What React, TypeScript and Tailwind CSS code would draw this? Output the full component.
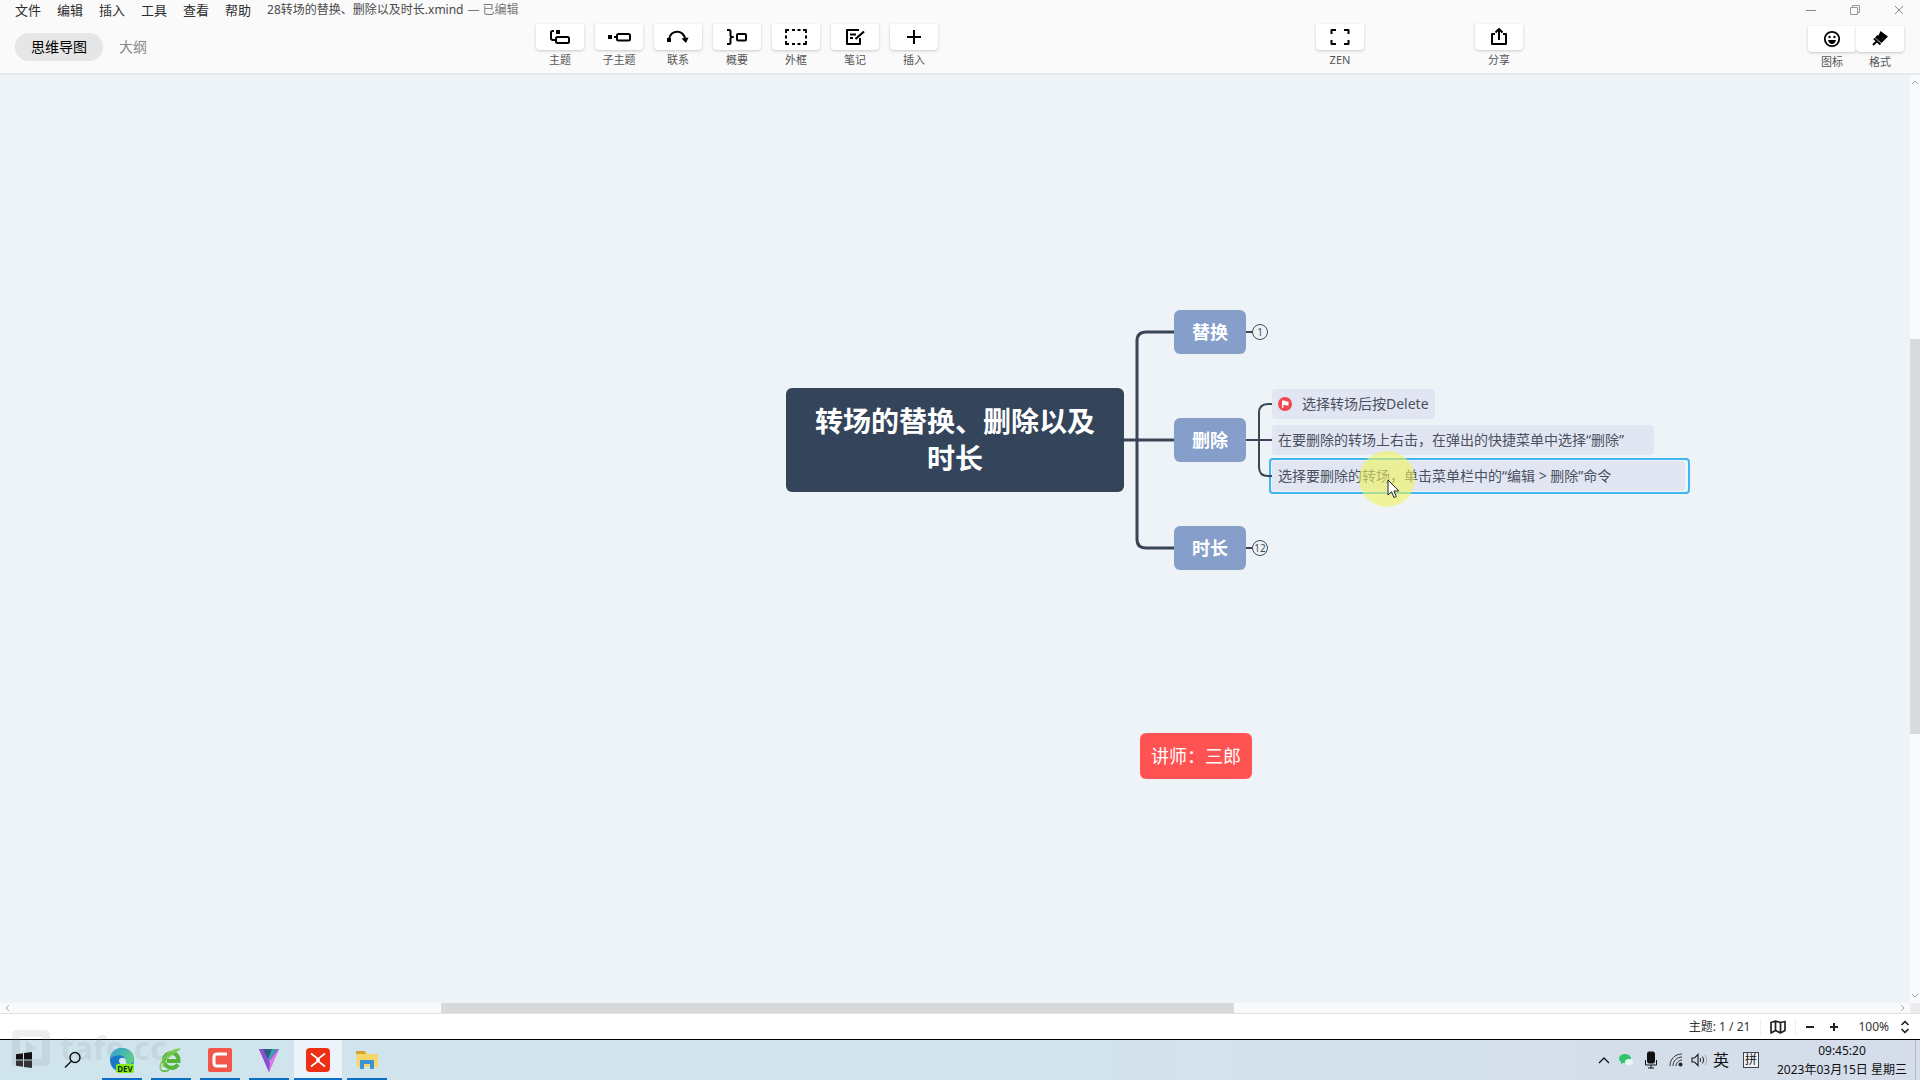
import React from "react";

const FONT = "font-['Noto_Sans','Noto_Sans_CJK_SC',sans-serif]";

const menus = ["文件", "编辑", "插入", "工具", "查看", "帮助"];

function Icon({ children, w = 24, h = 20 }: { children: React.ReactNode; w?: number; h?: number }) {
  return (
    <svg
      width={w}
      height={h}
      viewBox={`0 0 ${w} ${h}`}
      fill="none"
      stroke="#000"
      strokeWidth="2"
      strokeLinejoin="round"
      aria-hidden="true"
    >
      {children}
    </svg>
  );
}

const tools: { label: string; icon: React.ReactNode }[] = [
  {
    label: "主题",
    icon: (
      <Icon>
        <path d="M6 4H4.500Q3 4 3 5.500V11Q3 13 5 13H7" />
        <rect x="8" y="3" width="4" height="4" fill="#000" stroke="none" />
        <rect x="8" y="10" width="13" height="6" rx="1.500" />
      </Icon>
    ),
  },
  {
    label: "子主题",
    icon: (
      <Icon>
        <rect x="1" y="8" width="4" height="4" fill="#000" stroke="none" />
        <path d="M7 10H10" />
        <rect x="10" y="7" width="13" height="6.500" rx="1.500" />
      </Icon>
    ),
  },
  {
    label: "联系",
    icon: (
      <Icon>
        <path d="M3 12C5 3 16 2 19 11" />
        <rect x="1" y="11" width="4" height="4" fill="#000" stroke="none" />
        <path d="M15.500 11.500L22.500 10.500L20 16Z" fill="#000" stroke="none" />
      </Icon>
    ),
  },
  {
    label: "概要",
    icon: (
      <Icon>
        <path d="M2 3H4Q5.500 3 5.500 4.500V8.500Q5.500 10 8 10Q5.500 10 5.500 11.500V15.500Q5.500 17 4 17H2" />
        <rect x="12" y="7" width="9" height="6.500" rx="1" />
      </Icon>
    ),
  },
  {
    label: "外框",
    icon: (
      <Icon>
        <path d="M2 6V3H5M8 3H11M13.500 3H16.500M19 3H22V6M22 8.500V11.500M22 14V17H19M16.500 17H13.500M11 17H8M5 17H2V14M2 11.500V8.500" />
      </Icon>
    ),
  },
  {
    label: "笔记",
    icon: (
      <Icon>
        <path d="M16 3H4V17H17V11" />
        <path d="M7 7.500H13M7 11H10" strokeWidth="1.800" />
        <path d="M12.500 12L21 4.500" strokeWidth="2.200" />
      </Icon>
    ),
  },
  {
    label: "插入",
    icon: (
      <Icon>
        <path d="M12 3V17M5 10H19" />
      </Icon>
    ),
  },
];

function ToolButton({ label, icon }: { label: string; icon: React.ReactNode }) {
  return (
    <button className="flex w-12 flex-col items-center">
      <span className="flex h-[26px] w-full items-center justify-center rounded-b-sm bg-white shadow-[0_1px_3px_rgba(0,0,0,0.2)]">
        {icon}
      </span>
      <span className="mt-0.5 text-[11px] leading-4 whitespace-nowrap text-[#555]">{label}</span>
    </button>
  );
}

function Header() {
  return (
    <header className="border-b-2 border-[#e6e9ec] bg-[#fafafb]">
      <div className="flex h-6 items-start justify-between">
        <nav className="flex items-center pl-[15px]">
          {menus.map((m) => (
            <button key={m} className="mr-4 text-[13px] leading-5 text-[#2d2d2d]">
              {m}
            </button>
          ))}
          <span className="text-xs leading-5 text-[#4a4a4a]">28转场的替换、删除以及时长.xmind</span>
          <span className="ml-1 text-xs leading-5 text-[#777]">— 已编辑</span>
        </nav>
        <div className="flex h-5 items-center gap-8 pr-[15px]">
          <button aria-label="最小化">
            <Icon w={12} h={12}>
              <path d="M1 6.500H11" stroke="#888" strokeWidth="1" />
            </Icon>
          </button>
          <button aria-label="还原">
            <Icon w={12} h={12}>
              <path d="M1.500 3.500H8.500V10.500H1.500ZM3.500 3.500V1.500H10.500V8.500H8.500" stroke="#999" strokeWidth="1" />
            </Icon>
          </button>
          <button aria-label="关闭">
            <Icon w={12} h={12}>
              <path d="M2 2L10 10M10 2L2 10" stroke="#888" strokeWidth="1" />
            </Icon>
          </button>
        </div>
      </div>
      <div className="flex h-[49px] items-start">
        <div className="flex w-[536px] items-center pt-[9px] pl-[15px]">
          <button className="h-7 rounded-full bg-[#e6e6e6] px-4 text-sm leading-7 text-black">思维导图</button>
          <button className="ml-4 text-sm leading-7 text-[#8a8a8a]">大纲</button>
        </div>
        <div className="flex gap-[11px]">
          {tools.map((t) => (
            <ToolButton key={t.label} {...t} />
          ))}
        </div>
        <div className="grow-[378]" />
        <ToolButton
          label="ZEN"
          icon={
            <Icon>
              <path d="M3.500 7V3H8M16 3H20.500V7M20.500 13V17H16M8 17H3.500V13" />
            </Icon>
          }
        />
        <div className="grow-[111]" />
        <ToolButton
          label="分享"
          icon={
            <Icon>
              <path d="M8 7H5V17H19V7H16" />
              <path d="M12 13V2M8.500 5.500L12 2L15.500 5.500" />
            </Icon>
          }
        />
        <div className="grow-[285]" />
        <div className="flex pt-0.5 pr-4">
          <ToolButton
            label="图标"
            icon={
              <Icon>
                <circle cx="12" cy="10" r="7.200" strokeWidth="1.800" />
                <circle cx="9.500" cy="8" r="1.200" fill="#000" stroke="none" />
                <circle cx="14.500" cy="8" r="1.200" fill="#000" stroke="none" />
                <path d="M8 11H16Q15 15 12 15T8 11Z" fill="#000" stroke="none" />
              </Icon>
            }
          />
          <ToolButton
            label="格式"
            icon={
              <Icon>
                <path d="M12.500 2L20 7.500L13.500 14L7 8.500L9.500 6L10.500 6.500Z" fill="#000" stroke="none" />
                <path d="M6 9.500L12.500 15.500M9 12L5 16" />
              </Icon>
            }
          />
        </div>
      </div>
    </header>
  );
}

function Connectors() {
  return (
    <svg className="absolute top-0 left-0" width="1300" height="560" fill="none" stroke="#3a4555" aria-hidden="true">
      <g strokeWidth="3">
        <path d="M1124 365H1174" />
        <path d="M1174 257H1146Q1137 257 1137 266V464Q1137 473 1146 473H1174" />
      </g>
      <g strokeWidth="2">
        <path d="M1246 257H1252M1246 473H1252M1246 365H1272" />
        <path d="M1272 329H1268Q1259 329 1259 338V392Q1259 401 1268 401H1272" />
      </g>
    </svg>
  );
}

const topic =
  "absolute left-[1174px] flex h-11 w-[72px] items-center justify-center rounded-md bg-[#859fca] text-lg font-bold text-white";
const badge =
  "absolute left-[1252px] flex size-4 items-center justify-center rounded-full border border-[#444d5c] text-[10px] leading-none text-[#444d5c]";
const leaf = "absolute left-[1272px] flex h-[30px] items-center rounded-sm bg-[#e2e6f3] pl-1.5 text-sm whitespace-nowrap text-[#4a5060]";

function Canvas() {
  return (
    <main className="relative min-h-0 flex-1 overflow-hidden bg-[#edf3f7]">
      <div className="absolute top-[313px] left-[786px] flex h-[104px] w-[338px] items-center justify-center rounded-md bg-[#34445b] px-7 text-center text-[28px] leading-[37px] font-bold text-white">
        转场的替换、删除以及时长
      </div>
      <div className={`${topic} top-[235px]`}>替换</div>
      <div className={`${topic} top-[343px]`}>删除</div>
      <div className={`${topic} top-[451px]`}>时长</div>
      <button className={`${badge} top-[249px]`}>1</button>
      <button className={`${badge} top-[465px]`}>12</button>

      <div className={`${leaf} top-[314px] w-[163px]`}>
        <svg className="mr-2.5" width="14" height="14" viewBox="0 0 14 14" aria-hidden="true">
          <circle cx="7" cy="7" r="7" fill="#f0494d" />
          <path d="M4 3.500H7.500V4.500H10.500V8.500H7.500V8H5.300V11H4Z" fill="#fff" />
        </svg>
        选择转场后按Delete
      </div>
      <div className={`${leaf} top-[350px] w-[382px]`}>在要删除的转场上右击，在弹出的快捷菜单中选择“删除”</div>
      <div className="absolute top-[383px] left-[1269px] h-9 w-[421px] rounded border-2 border-[#3db6f2]" />
      <div className={`${leaf} top-[386px] w-[413px]`}>选择要删除的转场，单击菜单栏中的“编辑 &gt; 删除”命令</div>
      <Connectors />
      <div className="absolute top-[376px] left-[1359px] size-14 rounded-full bg-[#f0f45a]/60" />
      <svg className="absolute top-[404px] left-[1387px]" width="14" height="20" viewBox="0 0 14 20" aria-hidden="true">
        <path d="M1 1V16L4.500 12.800L7 18.500L9.300 17.500L6.900 12H11.800Z" fill="#fff" stroke="#222" strokeWidth="1" />
      </svg>

      <div className="absolute top-[658px] left-[1140px] flex h-[46px] w-28 items-center justify-center rounded-md bg-[#ff5353] text-lg text-white">
        讲师：三郎
      </div>

      <div className="absolute inset-y-0 right-0 flex w-2.5 flex-col items-center justify-between bg-[#f8fafc] py-1">
        <Icon w={8} h={6}>
          <path d="M1 5L4 2L7 5" stroke="#a5a5a5" strokeWidth="1" />
        </Icon>
        <Icon w={8} h={6}>
          <path d="M1 1L4 4L7 1" stroke="#a5a5a5" strokeWidth="1" />
        </Icon>
        <div className="absolute top-[264px] right-0 h-[395px] w-2.5 bg-[#d8dade]" />
      </div>
    </main>
  );
}

function HorizontalScroll() {
  return (
    <div className="relative flex h-2.5 items-center justify-between bg-[#f8fafb] pr-3.5 pl-1">
      <Icon w={6} h={8}>
        <path d="M5 1L2 4L5 7" stroke="#aaa" strokeWidth="1" />
      </Icon>
      <Icon w={6} h={8}>
        <path d="M1 1L4 4L1 7" stroke="#aaa" strokeWidth="1" />
      </Icon>
      <div className="absolute top-0 left-[441px] h-full w-[793px] bg-[#d7d9da]" />
      <div className="absolute top-0 right-0 h-full w-2.5 bg-[#ececee]" />
    </div>
  );
}

function StatusBar() {
  return (
    <div className="flex h-[26px] items-center justify-end border-t border-[#e2e2e2] bg-white pr-[9px] text-xs text-[#333]">
      <span>主题: 1 / 21</span>
      <button aria-label="导图" className="ml-2.5 border-x border-[#eee] px-2">
        <Icon w={18} h={16}>
          <path
            d="M2 3.500V14L6.500 11.500L11.500 14L16 11.500V2.500L11.500 3.500L6.500 2ZM6.500 2V11.500M11.500 3.500V14"
            stroke="#222"
            strokeWidth="1.700"
          />
        </Icon>
      </button>
      <button aria-label="缩小" className="ml-2">
        <Icon w={12} h={12}>
          <path d="M2 6H10" stroke="#222" />
        </Icon>
      </button>
      <button aria-label="放大" className="ml-3">
        <Icon w={12} h={12}>
          <path d="M2 6H10M6 2V10" stroke="#222" />
        </Icon>
      </button>
      <span className="ml-[18px]">100%</span>
      <button aria-label="缩放比例" className="ml-2.5">
        <Icon w={12} h={14}>
          <path d="M2.500 5L6 1.500L9.500 5M2.500 9L6 12.500L9.500 9" stroke="#222" strokeWidth="1.700" />
        </Icon>
      </button>
    </div>
  );
}

const apps: { name: string; active?: boolean; open?: boolean; icon: React.ReactNode }[] = [
  {
    name: "开始",
    icon: (
      <svg width="18" height="18" viewBox="0 0 18 18" fill="#111" aria-hidden="true">
        <path d="M1 3.200L8 2.200V8.500H1ZM9 2L17 1V8.500H9Z" />
        <path d="M1 9.500H8V15.800L1 14.800ZM9 9.500H17V17L9 16Z" fill="#333" />
      </svg>
    ),
  },
  {
    name: "搜索",
    icon: (
      <svg width="18" height="18" viewBox="0 0 18 18" fill="none" stroke="#111" strokeWidth="1.400" aria-hidden="true">
        <circle cx="11" cy="6.500" r="5" />
        <path d="M7.300 10.200L1 16.500" />
      </svg>
    ),
  },
  {
    name: "Edge Dev",
    open: true,
    icon: (
      <svg width="26" height="26" viewBox="0 0 26 26" aria-hidden="true">
        <defs>
          <linearGradient id="edgeTop" x1="0" y1="0" x2="1" y2="0.600">
            <stop offset="0" stopColor="#2c9fdc" />
            <stop offset="1" stopColor="#5fcf83" />
          </linearGradient>
        </defs>
        <circle cx="13" cy="13" r="12" fill="#1a78c8" />
        <path d="M1 12C2 4 8 1 13 1C20 1 25 6 25 12C25 15 23 17 20 17C17 17 16 15 17 13C16 8 7 6 1 12Z" fill="url(#edgeTop)" />
        <path d="M10 13C11 10 16 10 17 13C16 16 18 18 22 17C17 21 10 19 10 13Z" fill="#d3e6f2" />
        <rect x="7" y="17" width="18" height="9" rx="2" fill="#85ee15" />
        <text x="16" y="24.500" fontSize="8" fontWeight="700" textAnchor="middle" fill="#143010">
          DEV
        </text>
      </svg>
    ),
  },
  {
    name: "浏览器",
    open: true,
    icon: (
      <svg width="24" height="26" viewBox="0 0 24 26" fill="none" aria-hidden="true">
        <path d="M19 17.500C14 24 5 20 5 13.500C5 7 12 4 17 7.500C20 10 19.500 13 19.500 14H8" stroke="#55b53b" strokeWidth="4" />
        <path d="M2 23C-1 17 8 3 21 2C17 4 5 11 4 20" stroke="#7fcb53" strokeWidth="1.500" />
        <path d="M2 23C4 25 8 24 10 23" stroke="#55b53b" strokeWidth="1.500" />
      </svg>
    ),
  },
  {
    name: "Camtasia",
    open: true,
    icon: (
      <svg width="24" height="24" viewBox="0 0 24 24" aria-hidden="true">
        <rect width="24" height="24" rx="2" fill="#f0574a" />
        <path d="M19 6H9Q6 6 6 9V15Q6 18 9 18H19" fill="none" stroke="#fff" strokeWidth="3" />
      </svg>
    ),
  },
  {
    name: "VEGAS",
    open: true,
    icon: (
      <svg width="22" height="24" viewBox="0 0 22 24" aria-hidden="true">
        <path d="M1 1H21L11 24Z" fill="#9a5be0" />
        <path d="M5 1H19L10 14Z" fill="#32a6ad" />
        <path d="M5 1H14L9 13Z" fill="#2f5f80" />
        <path d="M21 1L11 24L9 16Z" fill="#e07ae8" />
        <path d="M1 1H5L12 15L11 24Z" fill="#8a4fd6" />
      </svg>
    ),
  },
  {
    name: "XMind",
    open: true,
    active: true,
    icon: (
      <svg width="24" height="24" viewBox="0 0 24 24" fill="none" aria-hidden="true">
        <rect width="24" height="24" rx="4" fill="#ed3015" />
        <path d="M5 5.500L12 11L19 5.500M5 18.500L12 13L19 18.500M10 12H14" stroke="#fff" strokeWidth="1.600" />
      </svg>
    ),
  },
  {
    name: "文件资源管理器",
    open: true,
    icon: (
      <svg width="24" height="20" viewBox="0 0 24 20" aria-hidden="true">
        <path d="M1 1H10L12 4H23V17H2Z" fill="#f8d568" />
        <path d="M1 1H10L11 4H1Z" fill="#d5a22c" />
        <path d="M5 10H19V19H15V14H9V19H5Z" fill="#3a93d4" />
      </svg>
    ),
  },
];

function Taskbar() {
  return (
    <footer className="relative flex h-[41px] items-stretch justify-between border-t border-black bg-linear-to-r from-[#cfe4ec] via-[#d2e4ee] to-[#d5dcea]">
      <div className="pointer-events-none absolute -top-2.5 left-3 flex items-center gap-2.5 text-[#8a9499] opacity-15">
        <svg width="38" height="36" viewBox="0 0 38 36" aria-hidden="true">
          <path
            fillRule="evenodd"
            d="M5 0H33Q38 0 38 5V31Q38 36 33 36H5Q0 36 0 31V5Q0 0 5 0ZM8 7V29H30V7ZM14 11L25 18L14 25Z"
            fill="currentColor"
          />
        </svg>
        <span className="text-[32px] leading-9 font-bold">tafe.cc</span>
      </div>
      <div className="flex">
        {apps.map((a) => (
          <button
            key={a.name}
            aria-label={a.name}
            className={`relative mr-px flex w-12 items-center justify-center ${a.active ? "bg-[#edf3fa]" : ""}`}
          >
            {a.icon}
            {a.open && (
              <span className={`absolute bottom-0 h-0.5 bg-[#0c6fc6] ${a.active ? "inset-x-0" : "inset-x-1"}`} />
            )}
          </button>
        ))}
      </div>
      <div className="flex items-center pr-1 text-[#111]">
        <button aria-label="显示隐藏的图标">
          <Icon w={14} h={10}>
            <path d="M2 8L7 3L12 8" stroke="#111" strokeWidth="1.300" />
          </Icon>
        </button>
        <svg className="ml-2" width="14" height="14" viewBox="0 0 14 14" aria-hidden="true">
          <ellipse cx="6" cy="5.500" rx="6" ry="4.500" fill="#2fc66b" />
          <path d="M2 8L2 11L6 9Z" fill="#2fc66b" />
          <ellipse cx="10" cy="9" rx="4" ry="3" fill="#eafaf0" />
        </svg>
        <svg className="ml-3" width="12" height="18" viewBox="0 0 12 18" fill="none" stroke="#111" aria-hidden="true">
          <rect x="2.500" y="1" width="7" height="11" rx="1.500" fill="#111" />
          <path d="M0.500 9V14H11.500V9M6 14V17M3 17H9" />
        </svg>
        <svg className="ml-3" width="14" height="14" viewBox="0 0 14 14" fill="none" stroke="#333" aria-hidden="true">
          <path d="M1 13C1 6 6 1 13 1M4 13C4 8 8 4 13 4M7 13C7 10 10 7 13 7" />
          <circle cx="11.500" cy="11.500" r="2" fill="#222" stroke="none" />
        </svg>
        <svg className="ml-2" width="18" height="14" viewBox="0 0 18 14" fill="none" stroke="#222" aria-hidden="true">
          <path d="M1 5H3.500L7 1.500V12.500L3.500 9H1Z" strokeWidth="1.200" />
          <path d="M9 5Q10.500 7 9 9M11.500 3.500Q14 7 11.500 10.500" />
          <path d="M14 2Q17.500 7 14 12" stroke="#aaa" />
        </svg>
        <span className="ml-1 text-base">英</span>
        <span className="ml-[14px] flex size-4 items-center justify-center border border-[#444] bg-[#eef3f8] text-xs leading-none">拼</span>
        <div className="ml-[18px] text-center text-xs leading-[19px]">
          <div>09:45:20</div>
          <div>2023年03月15日 星期三</div>
        </div>
        <span className="ml-2 h-full w-px bg-[#b4bac6]" />
      </div>
    </footer>
  );
}

export default function App() {
  return (
    <div className={`flex h-screen flex-col overflow-hidden ${FONT}`}>
      <Header />
      <Canvas />
      <HorizontalScroll />
      <StatusBar />
      <Taskbar />
    </div>
  );
}
